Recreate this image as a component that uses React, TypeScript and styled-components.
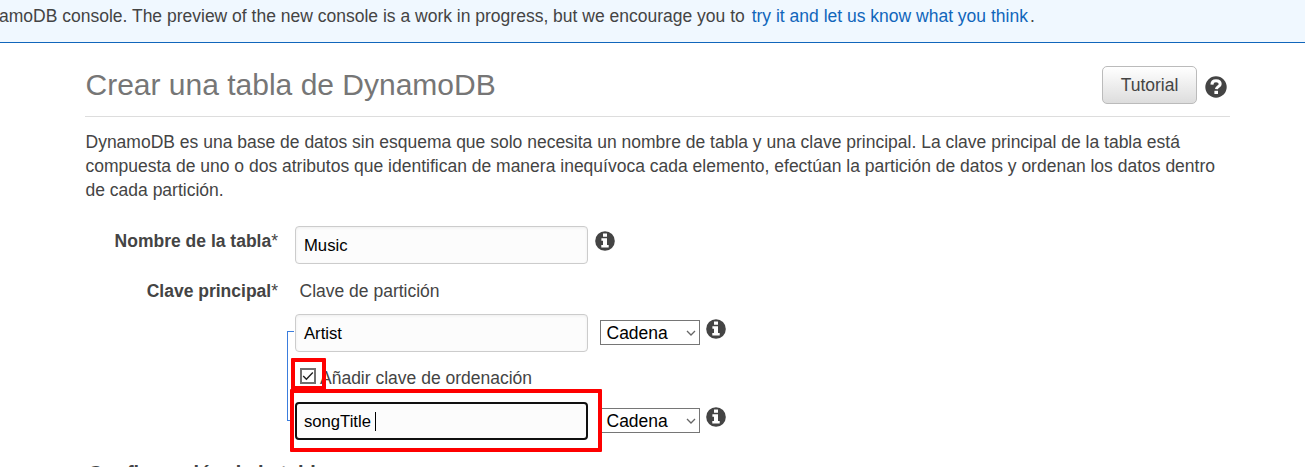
import React from "react";
import styled, { createGlobalStyle } from "styled-components";

const GlobalStyle = createGlobalStyle`
  * { box-sizing: border-box; }
  html, body { margin: 0; padding: 0; background: #fff; overflow: hidden; }
  body { font-family: "Liberation Sans", Arial, sans-serif; font-size: 17.5px; color: #444; }
`;

const Page = styled.div`
  width: 1305px;
  height: 467px;
  overflow: hidden;
`;

const Banner = styled.div`
  height: 43px;
  padding-top: 4px;
  line-height: 24px;
  background: #f0f8ff;
  border-bottom: 1px solid #1166bb;
  white-space: nowrap;
  text-indent: -1px;
`;

const BannerLink = styled.a`
  color: #1166bb;
  margin: 0 2px;
`;

const Content = styled.main`
  width: 1145px;
  margin-left: 85px;
`;

const Header = styled.header`
  display: flex;
  align-items: flex-start;
  height: 74px;
  padding-top: 23px;
  border-bottom: 1px solid #ddd;
`;

const Title = styled.h1`
  flex: 1;
  margin: 0;
  padding-left: 0.5px;
  font-size: 30px;
  font-weight: 400;
  line-height: 38px;
  color: #767676;
`;

const TutorialButton = styled.button`
  width: 95px;
  height: 38px;
  padding: 0;
  font: inherit;
  color: #444;
  border: 1px solid #bbb;
  border-radius: 5px;
  background: linear-gradient(#fff, #ddd);
`;

const HelpSlot = styled.span`
  display: flex;
  margin: 10px 3px 0 8px;
`;

const Intro = styled.p`
  margin: 13px 0 0;
  padding-left: 0.5px;
  line-height: 24px;
  white-space: nowrap;
`;

const Line = styled.span`
  display: block;
`;

const Form = styled.div`
  display: grid;
  grid-template-columns: 193px 1fr;
  column-gap: 17px;
  margin-top: 24px;
`;

const Label = styled.label`
  text-align: right;
  font-weight: 700;
  line-height: 30px;
`;

const Star = styled.span`
  font-weight: 400;
`;

const Row = styled.div<{ $height: number }>`
  display: flex;
  align-items: flex-start;
  height: ${(p) => p.$height}px;
`;

const Keys = styled.div`
  grid-column: 2;
  position: relative;
`;

const Connector = styled.div`
  position: absolute;
  left: -8px;
  top: 17px;
  width: 7px;
  height: 90px;
  border: 1px solid #3b7ddd;
  border-right: 0;
`;

const Field = styled.div<{ $focus?: boolean }>`
  display: flex;
  align-items: center;
  width: 293px;
  height: 38px;
  padding-top: 1px;
  padding-left: ${(p) => (p.$focus ? 7 : 8)}px;
  font-size: 16.67px;
  color: #000;
  background: #fcfcfc;
  border: ${(p) => (p.$focus ? "2px solid #101010" : "1px solid #ccc")};
  border-radius: 4px;
  box-shadow: ${(p) => (p.$focus ? "none" : "inset 0 1px 3px rgba(0, 0, 0, 0.06)")};
`;

const Caret = styled.span`
  width: 1px;
  height: 19px;
  margin-left: 4px;
  background: #000;
`;

const Select = styled.div`
  display: flex;
  align-items: center;
  justify-content: space-between;
  width: 100px;
  height: 25px;
  margin: 6px 6px 0 12px;
  padding: 1px 3px 0 5.5px;
  color: #000;
  background: #fff;
  border: 1px solid #767676;
`;

const InfoSlot = styled.span<{ $left?: number }>`
  display: flex;
  margin: 5px 0 0 ${(p) => p.$left ?? 0}px;
`;

const PartitionLabel = styled.div`
  padding-left: 4.5px;
  line-height: 30px;
`;

const CheckRow = styled.div`
  display: flex;
  height: 50px;
  padding: 16px 0 0 5px;
`;

const CheckLabel = styled.span`
  margin: -4px 0 0 4px;
  line-height: 28px;
`;

const Highlight = styled.div<{ $x: number; $y: number; $w: number; $h: number }>`
  position: absolute;
  left: ${(p) => p.$x}px;
  top: ${(p) => p.$y}px;
  width: ${(p) => p.$w}px;
  height: ${(p) => p.$h}px;
  border: 4px solid #fe0000;
  border-radius: 1px;
`;

const SectionTitle = styled.h2`
  margin: 21px 0 0 3px;
  font-size: 20px;
  line-height: 24px;
`;

const InfoIcon = () => (
  <svg width="20" height="20" viewBox="0 0 20 20">
    <circle cx="10" cy="10" r="9.8" fill="#444" />
    <path d="M8 2.6h4v3.2H8zM6.4 7.2h5.6v6.8h1.7v2.6H6.3v-2.6H8V9.8H6.4z" fill="#fff" />
  </svg>
);

const HelpIcon = () => (
  <svg width="22" height="22" viewBox="0 0 22 22">
    <circle cx="11" cy="11" r="10.7" fill="#444" />
    <path
      d="M6.9 8.6C7 5.8 8.7 4.7 11 4.7c2.4 0 4.2 1.2 4.2 3.2 0 2.7-3.5 2.7-3.8 5.3"
      fill="none"
      stroke="#fff"
      strokeWidth="3"
    />
    <rect x="9.4" y="14.8" width="3.6" height="3.2" fill="#fff" />
  </svg>
);

const Chevron = () => (
  <svg width="10" height="8" viewBox="0 0 10 8">
    <path d="M1 2l4 4 4-4" fill="none" stroke="#666" strokeWidth="1.3" />
  </svg>
);

const CheckBox = () => (
  <svg width="16" height="16" viewBox="0 0 16 16">
    <rect x="1" y="1" width="14" height="14" fill="#fff" stroke="#707070" strokeWidth="2" />
    <path d="M3.2 8l3.2 3.2 6.4-6.6" fill="none" stroke="#222" strokeWidth="1.4" />
  </svg>
);

export default function App() {
  return (
    <Page>
      <GlobalStyle />
      <Banner>
        amoDB console. The preview of the new console is a work in progress, but we encourage you to{" "}
        <BannerLink>try it and let us know what you think</BannerLink>.
      </Banner>
      <Content>
        <Header>
          <Title>Crear una tabla de DynamoDB</Title>
          <TutorialButton>Tutorial</TutorialButton>
          <HelpSlot>
            <HelpIcon />
          </HelpSlot>
        </Header>
        <Intro>
          <Line>
            DynamoDB es una base de datos sin esquema que solo necesita un nombre de tabla y una clave principal. La
            clave principal de la tabla está
          </Line>
          <Line>
            compuesta de uno o dos atributos que identifican de manera inequívoca cada elemento, efectúan la partición
            de datos y ordenan los datos dentro
          </Line>
          <Line>de cada partición.</Line>
        </Intro>
        <Form>
          <Label>
            Nombre de la tabla<Star>*</Star>
          </Label>
          <Row $height={50}>
            <Field>Music</Field>
            <InfoSlot $left={7}>
              <InfoIcon />
            </InfoSlot>
          </Row>
          <Label>
            Clave principal<Star>*</Star>
          </Label>
          <Row $height={38}>
            <PartitionLabel>Clave de partición</PartitionLabel>
          </Row>
          <Keys>
            <Connector />
            <Row $height={38}>
              <Field>Artist</Field>
              <Select>
                Cadena
                <Chevron />
              </Select>
              <InfoSlot>
                <InfoIcon />
              </InfoSlot>
            </Row>
            <CheckRow>
              <CheckBox />
              <CheckLabel>Añadir clave de ordenación</CheckLabel>
            </CheckRow>
            <Row $height={38}>
              <Field $focus>
                songTitle
                <Caret />
              </Field>
              <Select>
                Cadena
                <Chevron />
              </Select>
              <InfoSlot>
                <InfoIcon />
              </InfoSlot>
            </Row>
            <Highlight $x={-4} $y={44} $w={35} $h={32} />
            <Highlight $x={-5} $y={75} $w={312} $h={63} />
          </Keys>
        </Form>
        <SectionTitle>Configuración de la tabla</SectionTitle>
      </Content>
    </Page>
  );
}
